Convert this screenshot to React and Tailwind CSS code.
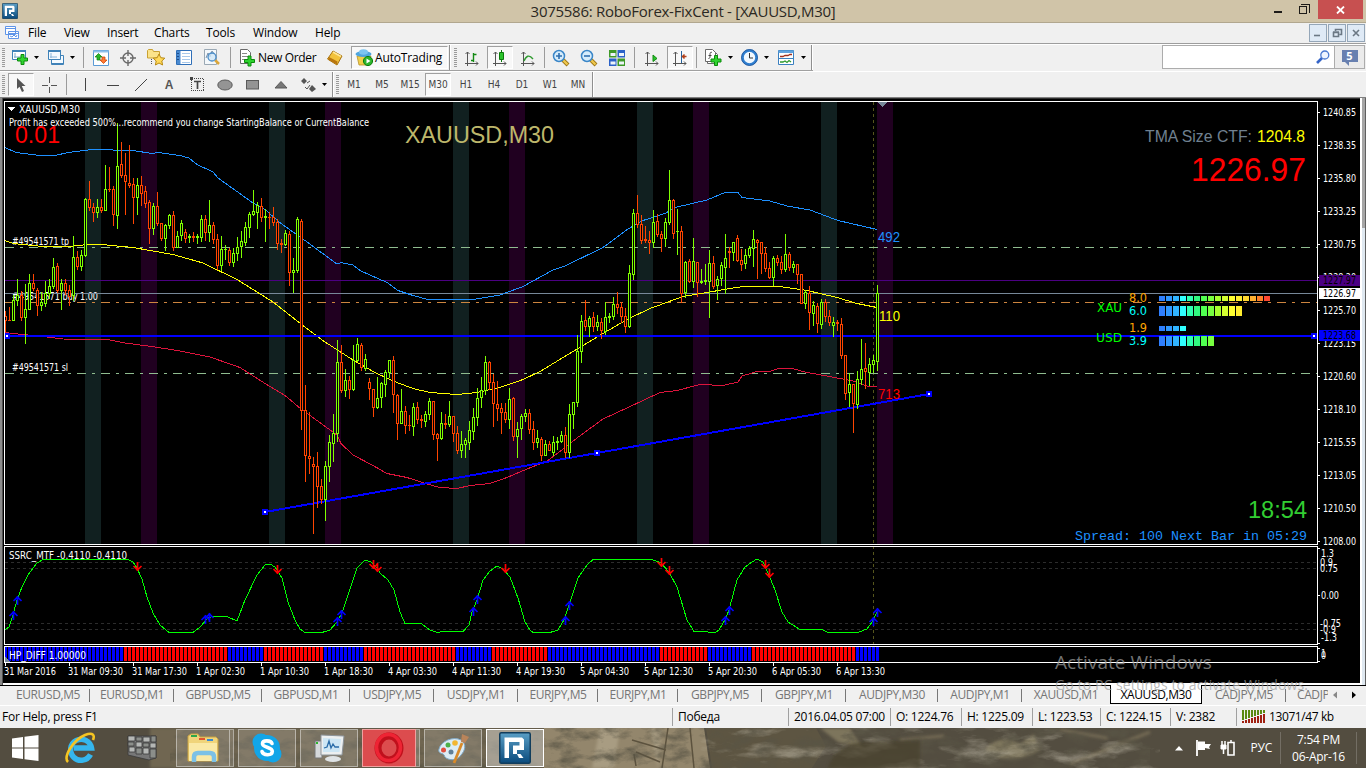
import React from 'react';

// [rising, high, bodyTop, bodyBottom, low] in chart pixels, one bar every 4px
const CANDLES = [
  [0,311,316,320,331],[0,307,320,320,320],[1,295,300,320,320],[1,279,295,300,305],[0,291,295,317,320],[1,284,309,317,343],
  [1,274,283,309,309],[0,274,283,288,290],[0,288,290,305,315],[1,292,302,305,310],[1,281,293,303,306],[1,279,286,293,298],
  [1,258,267,286,288],[0,263,266,290,292],[1,279,283,290,309],[0,279,283,290,294],[0,285,290,296,305],[1,236,257,295,300],
  [0,251,257,266,269],[1,250,255,266,270],[1,198,199,255,256],[0,181,199,207,210],[0,203,207,212,221],[1,199,207,212,217],
  [0,199,207,210,212],[1,165,189,210,210],[0,167,189,189,191],[0,186,189,214,225],[1,123,166,215,228],[0,142,164,175,177],
  [0,153,175,181,214],[0,145,183,185,187],[0,178,184,197,223],[1,178,185,197,214],[0,176,185,193,205],[0,186,191,203,207],
  [0,200,202,228,243],[1,203,206,228,234],[0,192,206,223,225],[0,223,223,238,240],[1,224,225,238,250],[1,214,215,225,228],
  [0,211,215,247,250],[1,231,236,247,247],[1,220,223,235,240],[0,229,232,238,242],[1,234,236,237,242],[0,232,236,237,241],
  [1,234,236,237,243],[1,215,219,237,241],[0,215,219,232,240],[1,200,225,232,241],[0,222,225,239,243],[0,234,239,265,269],
  [1,236,249,265,270],[1,245,249,249,259],[0,248,250,262,265],[1,248,253,262,266],[1,237,247,253,260],[1,231,241,246,257],
  [1,222,227,242,245],[1,212,214,227,237],[1,190,211,214,215],[1,202,205,212,228],[0,198,206,217,221],[1,209,216,217,241],
  [0,212,217,217,228],[0,207,217,222,225],[0,219,222,243,249],[0,239,243,244,252],[1,230,233,244,245],[0,231,234,272,285],
  [1,258,270,272,292],[1,217,219,270,272],[0,219,221,410,429],[0,385,410,455,481],[0,412,456,458,473],[0,457,464,466,533],
  [0,452,466,486,507],[0,479,486,499,503],[1,461,466,499,520],[1,435,442,466,481],[1,414,433,443,461],[1,340,362,433,441],
  [0,345,362,390,392],[1,369,380,390,396],[0,376,380,389,398],[1,345,360,389,390],[1,338,344,360,361],[0,343,345,367,370],
  [1,354,359,368,370],[0,378,382,388,399],[0,389,389,407,416],[1,377,398,407,408],[1,382,383,397,407],[1,370,372,384,396],
  [1,360,360,372,377],[0,356,360,394,412],[0,394,395,423,439],[1,389,411,423,423],[0,406,411,425,433],[0,415,425,425,430],
  [1,403,407,426,435],[0,402,407,419,423],[0,415,419,420,427],[1,411,414,421,426],[1,398,401,414,419],[0,401,401,434,439],
  [0,433,434,438,460],[1,412,423,438,439],[0,414,423,424,428],[1,401,416,424,426],[0,416,416,433,441],[0,426,433,450,453],
  [1,431,444,450,457],[1,438,440,444,457],[1,421,430,442,449],[1,408,417,431,439],[1,388,398,417,425],[1,377,390,397,407],
  [1,356,362,390,394],[0,361,362,382,389],[0,374,382,403,426],[0,381,404,408,420],[0,403,408,412,433],[0,403,412,419,422],
  [1,388,399,419,428],[0,397,398,436,440],[1,422,429,436,457],[1,414,416,428,439],[1,409,413,416,421],[0,409,413,429,433],
  [0,421,429,442,449],[1,430,438,442,447],[0,437,439,455,460],[1,440,444,455,455],[0,441,444,450,450],[1,436,442,452,455],
  [1,437,441,442,449],[1,431,435,441,442],[0,427,435,452,457],[1,404,414,452,457],[1,402,402,414,428],[1,335,351,402,406],
  [1,315,321,351,362],[0,300,320,326,330],[1,316,318,326,336],[0,312,317,326,331],[1,315,322,326,330],[0,318,322,330,338],
  [1,302,317,331,334],[1,313,316,317,322],[1,297,304,316,319],[0,292,304,307,313],[0,302,307,316,322],[0,308,316,326,332],
  [1,265,273,326,327],[1,209,213,274,279],[0,195,213,224,227],[0,215,224,240,243],[0,226,239,240,242],[0,231,240,242,253],
  [1,210,222,242,247],[0,214,221,234,236],[0,231,234,238,251],[1,218,222,238,246],[1,170,200,222,224],[0,199,200,233,238],
  [1,209,231,231,254],[0,226,231,293,302],[1,261,262,292,297],[0,259,261,281,282],[1,238,261,281,287],[0,262,262,282,296],
  [1,269,281,282,283],[1,264,280,281,284],[1,250,263,281,317],[0,256,263,286,288],[1,276,279,285,299],[1,262,265,278,285],
  [1,234,258,267,293],[0,247,251,252,267],[1,242,242,252,260],[0,235,238,260,261],[0,249,260,264,270],[1,249,255,263,268],
  [1,246,248,255,257],[1,230,239,248,266],[0,239,240,242,278],[0,242,242,253,273],[0,247,253,268,271],[0,262,268,277,278],
  [1,256,258,277,285],[0,255,258,262,265],[0,256,262,269,273],[1,234,254,269,271],[0,252,254,267,270],[1,261,264,267,272],
  [0,264,264,274,283],[0,274,274,303,303],[1,290,292,303,308],[0,286,293,312,329],[1,301,305,313,325],[0,303,306,323,332],
  [1,299,302,324,328],[0,299,302,316,321],[0,310,316,322,325],[1,317,322,325,336],[0,320,322,323,330],[0,318,324,355,358],
  [0,355,355,393,399],[1,373,384,392,406],[0,384,384,403,432],[1,371,379,404,408],[1,339,369,379,384],[0,343,368,371,388],
  [1,358,364,372,385],[1,355,360,364,372],[1,285,293,361,370],
];

const UPPER = '5,147.5 16,152.5 40,155.5 55,155.5 68,152.5 92,149.5 133,150.5 152,153.5 158,152.5 180,155.5 189,158 197,164.5 213,172 218,178 237,191.5 253,203 265,209.5 281,223.5 305,240.5 337,264 341,262.5 353,265 361,271 387,282.5 398,290.5 413,295.5 428,299.5 470,300 500,295 523,286.5 553,270 565,266 603,247.5 628,229 643,220.5 665,213.5 675,207.5 707,200 725,192.5 738,192.5 742,197.5 770,201 787,206 810,210 838,220.5 877,229.5';
const MIDDLE = '5,240.5 13,243.5 43,246.5 68,246.5 88,244.5 107,245 133,247.5 150,250.5 173,254.5 203,263 237,279.5 273,302 301,324 325,342 353,360 373,371.5 393,381 413,388.5 430,392.5 457,394.5 477,392.5 500,387.5 523,379.5 540,371.5 573,351.5 603,333.5 628,319 650,308.5 683,296.5 707,292.5 727,289 743,286.5 780,286.5 807,290.5 837,297.5 857,303.5 877,307.5';
const LOWER = '5,332.5 13,333.5 43,336.5 63,339 107,339.5 125,343 155,347 180,351 210,357 240,367.5 265,383.5 285,395.5 301,409 317,420.5 337,435 341,443.5 353,455 373,465.5 387,473.5 407,477.5 427,484 440,487.5 457,488.5 470,485.5 490,483.5 507,477.5 527,469 547,461 562,450 577,438 603,419 628,407.5 660,392.5 677,390.5 700,384.5 723,385.5 738,382 742,376 757,371.5 770,371.5 778,368.5 792,368.5 807,372.5 827,376 853,381 867,386 877,386.5';
const SSRC = '5,630 9,627 13,615 17,600 22,587 28,575 37,563 43,559.5 128,559.5 133,562 137,568 142,579 147,597 153,613 160,625 169,632.5 193,632.5 200,627 208,618 213,616.5 227,616.5 237,621 245,600 257,575 265,565 270,564 275,567 282,578 288,602 295,620 300,629 305,632.5 322,632.5 330,630 337,622 342,613 348,595 357,568 365,560 371,562 377,568 380,573 388,580 394,590 400,612 405,623.5 421,623.5 430,630 437,632.5 443,631.5 463,631.5 469,625 472,612 477,600 483,580 490,571 497,566 503,569 510,577 518,598 525,622 530,630 533,632.5 550,632.5 558,630 564,620 569,605 578,578 587,565 593,559.5 652,559.5 661,563 669,572 677,587 687,620 694,631.5 707,631.5 709,632.5 715,632.5 719,630 725,620 729,610 737,580 745,567 752,562 757,559 763,562 768,573 775,590 782,612 788,622 800,629.5 822,629.5 828,632.5 858,632.5 867,629 872,622 877,612';

const DOWN_ARROWS = [[137,562],[277,565],[373,560],[377,563],[505,564],[661,558],[669,566],[765,560],[769,569]];
const UP_ARROWS = [[13,610],[17,595],[205,614],[209,612],[337,616],[341,609],[473,606],[477,594],[565,615],[569,600],[725,615],[729,605],[873,616],[877,607]];

// start index of each run in the HP_DIFF histogram, colours alternate from blue
const HP_RUNS = [0, 30, 56, 65, 80, 90, 113, 122, 136, 164, 176, 187, 213, 219];

const PRICES = ['1240.85', '1238.35', '1235.80', '1233.25', '1230.75', '1228.20', '1225.70', '1223.15', '1220.60', '1218.10', '1215.55', '1213.05', '1210.50', '1208.00'];
const TIMES = ['31 Mar 2016', '31 Mar 09:30', '31 Mar 17:30', '1 Apr 02:30', '1 Apr 10:30', '1 Apr 18:30', '4 Apr 03:30', '4 Apr 11:30', '4 Apr 19:30', '5 Apr 04:30', '5 Apr 12:30', '5 Apr 20:30', '6 Apr 05:30', '6 Apr 13:30'];
const HEAT = ['#2f80ff', '#3098ff', '#30b4ff', '#30ffff', '#30ffb0', '#30f880', '#50ff50', '#78ff40', '#a8ff30', '#d4ff30', '#ffff30', '#ffee30', '#ffd830', '#ffb030', '#ff8028', '#ff4830'];
const STRENGTH = [[296, 5, 16], [306, 10, 12], [326, 5, 4], [336, 10, 8]];

const TAHOMA = '"DejaVu Sans Condensed", "DejaVu Sans", sans-serif';
const ARIAL = '"Liberation Sans", Arial, sans-serif';

const T = ({ x, y, w, size = 10, fill = '#fff', font = TAHOMA, children }) => (
  <text x={x} y={y} textLength={w} lengthAdjust="spacingAndGlyphs" fontSize={size} fill={fill} fontFamily={font}>{children}</text>
);

const Candle = ({ index, data }) => {
  const [up, high, top, bottom, low] = data;
  const x = 5 + index * 4;
  const color = up ? '#7fff00' : '#ff4500';
  return (
    <g>
      <rect x={x} y={high} width="1" height={low - high + 1} fill={color} />
      <rect x={x - 1} y={top} width="3" height={bottom - top + 1} fill={color} />
      {bottom - top > 1 && <rect x={x} y={top + 1} width="1" height={bottom - top - 1} fill="#000" />}
    </g>
  );
};

const Handle = ({ x, y }) => (
  <g>
    <rect x={x - 3} y={y - 3} width="6" height="6" fill="#0000ff" />
    <rect x={x - 1} y={y - 1} width="2" height="2" fill="#fff" />
  </g>
);

const Chart = () => (
  <svg width="1357" height="584" viewBox="3 99 1357 584" className="block bg-black" shapeRendering="crispEdges">
    {/* session bands */}
    {[85, 269, 453, 637, 821].map(x => <rect key={x} x={x} y="102" width="16" height="442" fill="#112020" />)}
    {[141, 325, 509, 693, 877].map(x => <rect key={x} x={x} y="102" width="16" height="442" fill="#200020" />)}
    <path d="M873.5 102V661" stroke="#55551c" strokeDasharray="3 3" />

    {/* order and price levels */}
    <path d="M5 247.5H1317M5 373.5H1317" stroke="#8fbc8f" strokeDasharray="9 6 3 6" />
    <path d="M5 302.5H1317" stroke="#cd853f" strokeDasharray="9 6 3 6" />
    <T x={12} y={245} w={57}>#49541571 tp</T>
    <T x={12} y={300} w={86}>#49541571 buy 1.00</T>
    <T x={12} y={371} w={56}>#49541571 sl</T>
    <path d="M5 280.5H1317" stroke="#4b0082" />
    <path d="M5 293.5H1317" stroke="#778899" />

    <polyline points={LOWER} fill="none" stroke="#dc143c" />
    <polyline points={UPPER} fill="none" stroke="#1e90ff" />
    <polyline points={MIDDLE} fill="none" stroke="#ffff00" />
    <path d="M5 336H1317" stroke="#0000ff" strokeWidth="2" />
    <path d="M265 512L929 394" stroke="#0000ff" strokeWidth="2" />
    {CANDLES.map((c, i) => <Candle key={i} index={i} data={c} />)}
    <Handle x={7} y={336} />
    <Handle x={1314} y={336} />
    <Handle x={265} y={512} />
    <Handle x={597} y={453} />
    <Handle x={929} y={394} />

    {/* frames */}
    <path d="M4.5 101.5H1317.5V544.5H4.5ZM4.5 546.5H1317.5V644.5H4.5ZM4.5 646.5H1317.5V662.5H4.5Z" fill="none" stroke="#fff" />
    <path d="M877 102h11l-5.5 5z" fill="#778899" />

    <path d="M8 107h7l-3.5 4z" fill="#fff" />
    <T x={19} y={113} w={61}>XAUUSD,M30</T>
    <T x={9} y={126} w={360}>Profit has exceeded 500%...recommend you change StartingBalance or CurrentBalance</T>
    <T x={15} y={143} w={45} size={24} fill="#ff0000" font={ARIAL}>0.01</T>
    <T x={405} y={143} w={149} size={24} fill="#bdb76b" font={ARIAL}>XAUUSD,M30</T>
    <T x={1145} y={142} w={107} size={17} fill="#708090" font={ARIAL}>TMA Size CTF:</T>
    <T x={1257} y={142} w={48} size={17} fill="#ffff00" font={ARIAL}>1204.8</T>
    <T x={1191} y={181} w={115} size={33} fill="#ff0000" font={ARIAL}>1226.97</T>
    <T x={1248} y={518} w={59} size={24} fill="#32cd32" font={ARIAL}>18:54</T>
    <T x={1075} y={540} w={232} size={13} fill="#1e90ff" font={'"Liberation Mono", monospace'}>Spread: 100 Next Bar in 05:29</T>
    <T x={878} y={242} w={22} size={14} fill="#1e90ff" font={ARIAL}>492</T>
    <T x={879} y={321} w={21} size={14} fill="#ffff00" font={ARIAL}>110</T>
    <T x={878} y={399} w={22} size={14} fill="#ff0000" font={ARIAL}>713</T>

    {/* currency strength meter */}
    <T x={1097} y={312} w={25} size={13} fill="#00ff00">XAU</T>
    <T x={1096} y={342} w={26} size={13} fill="#00ff00">USD</T>
    <T x={1129} y={302} w={18} size={12} fill="#ffa500">8.0</T>
    <T x={1129} y={315} w={18} size={12} fill="#00ffff">6.0</T>
    <T x={1129} y={332} w={18} size={12} fill="#ffa500">1.9</T>
    <T x={1129} y={345} w={18} size={12} fill="#00ffff">3.9</T>
    {STRENGTH.map(([y, h, n]) => HEAT.slice(0, n).map((c, i) => (
      <rect key={y + c} x={1159 + i * 7} y={y} width="6" height={h} fill={c} />
    )))}

    {/* SSRC oscillator */}
    <path d="M5 562.5H1317M5 568.5H1317M5 623.5H1317M5 629.5H1317" stroke="#2c2c2c" strokeDasharray="3 3" />
    <polyline points={SSRC} fill="none" stroke="#00ff00" />
    {DOWN_ARROWS.map(([x, y]) => (
      <path key={x} d={`M${x + 0.5} ${y}v9M${x - 3.5} ${y + 4}l4 4l4 -4`} fill="none" stroke="#ff0000" strokeWidth="1.7" shapeRendering="auto" />
    ))}
    {UP_ARROWS.map(([x, y]) => (
      <path key={x} d={`M${x + 0.5} ${y + 10}v-9M${x - 3.5} ${y + 6}l4 -4l4 4`} fill="none" stroke="#0000ff" strokeWidth="1.7" shapeRendering="auto" />
    ))}
    <T x={9} y={559} w={118}>SSRC_MTF -0.4110 -0.4110</T>

    {/* HP_DIFF histogram */}
    {CANDLES.map((c, i) => {
      const run = HP_RUNS.filter(s => s <= i).length - 1;
      return <rect key={i} x={4 + i * 4 + (i ? 0 : 1)} y="647" width={i ? 3 : 2} height="14" fill={run % 2 ? '#ff0000' : '#0000ff'} />;
    })}
    <path d="M5 657l5 5h-5z" fill="#778899" />
    <T x={9} y={659} w={77}>HP_DIFF 1.00000</T>

    {/* price axis */}
    {PRICES.map((p, i) => (
      <g key={p}>
        <path d={`M1318 ${112.5 + i * 33}h2`} stroke="#fff" />
        <T x={1323} y={116 + i * 33} w={33}>{p}</T>
      </g>
    ))}
    <rect x="1319" y="275" width="41" height="11" fill="#4b0082" />
    <T x={1323} y={284} w={33} fill="#000">1227.97</T>
    <rect x="1319" y="288" width="41" height="11" fill="#fff" />
    <T x={1323} y={297} w={33} fill="#000">1226.97</T>
    <rect x="1319" y="330" width="41" height="11" fill="#0000ff" />
    <T x={1323} y={339} w={33} fill="#000">1223.68</T>

    <path d="M1318 548.5h2M1318 595.5h2M1318 643.5h2M1318 648.5h2M1318 661.5h2" stroke="#fff" />
    <T x={1321} y={557} w={13}>1.3</T>
    <T x={1320} y={566} w={13}>0.9</T>
    <T x={1320} y={572} w={18}>0.75</T>
    <T x={1321} y={599} w={18}>0.00</T>
    <T x={1320} y={627} w={21}>-0.75</T>
    <T x={1320} y={633} w={16}>-0.9</T>
    <T x={1321} y={641} w={16}>-1.3</T>
    <T x={1321} y={657} w={5}>1</T>
    <T x={1321} y={659} w={5}>0</T>

    {/* time axis */}
    {TIMES.map((t, i) => (
      <g key={t}>
        <path d={`M${5.5 + i * 64} 663v3`} stroke="#fff" />
        <T x={4 + i * 64} y={675} w={i === 0 ? 52 : i < 3 ? 55 : 49}>{t}</T>
      </g>
    ))}
  </svg>
);

const Grip = () => (
  <div className="w-[6px] h-full shrink-0 flex items-center pl-[2px]">
    <svg width="3" height="20" shapeRendering="crispEdges"><path d="M1.5 0v20" stroke="#9a9a9a" strokeWidth="3" strokeDasharray="1 1" /></svg>
  </div>
);

const Sep = ({ className = 'w-[7px]' }) => (
  <div className={`${className} h-full shrink-0 flex items-center justify-center`}>
    <div className="w-px h-[21px] bg-[#9b9b9b]"></div>
  </div>
);

const Edge = () => <div className="w-[2px] h-full shrink-0 border-l border-[#8f8f8f] bg-white"></div>;

const Tool = ({ className = 'w-[28px]', active, children }) => (
  <div className={`${className} h-full shrink-0 flex items-center justify-center`}>
    {active ? (
      <div className="w-[26px] h-[23px] flex items-center justify-center bg-[#f8f8f8] border border-[#a0a0a0] border-r-white border-b-white">{children}</div>
    ) : children}
  </div>
);

const Caret = ({ className = 'w-[7px]' }) => (
  <div className={`${className} shrink-0 flex items-center justify-center`}>
    <svg width="5" height="3" className="shrink-0"><path d="M0 0h5L2.5 3z" fill="#000" /></svg>
  </div>
);

const Plus = ({ x, y }) => (
  <path transform={`translate(${x} ${y})`} d="M4 .5h3v3.5h3.5v3H7v3.5H4V7H.5V4H4z" fill="#2fd32f" stroke="#0a8a0a" />
);

const Axes = ({ children }) => (
  <svg width="16" height="16" viewBox="0 0 16 16" fill="none" stroke="#555">
    <path d="M3.5 2v14M1 13.5h13M1.500 4l2-2 2 2M12 11.500l2 2-2 2" />
    {children}
  </svg>
);

const Magnifier = ({ plus }) => (
  <svg width="18" height="18" viewBox="0 0 18 18">
    <path d="M11 11l5 5" stroke="#9a7416" strokeWidth="4" />
    <path d="M11 11l4.500 4.500" stroke="#efc84e" strokeWidth="2.400" />
    <circle cx="7" cy="7" r="5.500" fill="#d6ecfb" stroke="#3a86c8" strokeWidth="1.500" />
    <path d={plus ? 'M4 7h6M7 4v6' : 'M4 7h6'} stroke="#2f6fb0" strokeWidth="1.600" />
  </svg>
);

const RoboLogo = ({ size }) => (
  <svg width={size} height={size} viewBox="0 0 32 32">
    <defs>
      <linearGradient id="robo" x1="0" y1="0" x2="0" y2="1"><stop offset="0" stopColor="#5a9fc6" /><stop offset="1" stopColor="#0a4a7c" /></linearGradient>
    </defs>
    <rect x=".75" y=".75" width="30.500" height="30.500" rx="1.500" fill="url(#robo)" stroke="#123d5c" strokeWidth="1.500" />
    <path d="M5.500 26V5.500H23l2 2V18h-7v4h-4v-8.500h6.500V10H10v16z" fill="#fff" />
    <path d="M18 22h3.500l3 4H20z" fill="#fff" />
  </svg>
);

const TitleBar = () => (
  <div className="h-[23px] bg-[#d0c4a8] border-b border-[#b1a78f] flex relative">
    <div className="w-[20px] pl-[2px] pt-[3px]"><RoboLogo size={16} /></div>
    <div className="flex-1 text-center text-[15px] leading-[22px] text-[#2b2823] tracking-[-0.28px] pr-[20px]">3075586: RoboForex-FixCent - [XAUUSD,M30]</div>
    <div className="absolute right-[3px] top-0 flex h-[19px]">
      <svg width="72" height="19" fill="none" stroke="#1d1b18" shapeRendering="crispEdges">
        <path d="M28 12h8" strokeWidth="2" />
        <path d="M53.500 6.500h7v7h-7zM53 6h8M55 4.500h8v8" />
      </svg>
      <div className="w-[45px] bg-[#c75050] flex items-center justify-center">
        <svg width="9" height="8"><path d="M1 .5l7 7M8 .5l-7 7" stroke="#fff" strokeWidth="1.800" /></svg>
      </div>
    </div>
  </div>
);

const MenuBar = () => (
  <div className="h-[21px] flex items-center border-b border-[#9d9d9d] text-[12px] text-black relative">
    <svg width="16" height="16" viewBox="0 0 16 16" className="ml-[4px]" fill="#fff" stroke="#5f95e8">
      <path d="M1.500 1.500h10v8h-10zM1 3.500h11M4.500 6.500h10v7h-10zM4 8.500h11" /><path d="M6 11l2 1 2-2 2 2 1-2" fill="none" />
    </svg>
    <div className="flex pl-[8px] tracking-[-0.15px]">
      <span className="w-[36px]">File</span>
      <span className="w-[43px]">View</span>
      <span className="w-[47px]">Insert</span>
      <span className="w-[52px]">Charts</span>
      <span className="w-[47px]">Tools</span>
      <span className="w-[62px]">Window</span>
      <span>Help</span>
    </div>
    <div className="absolute right-[1px] top-px flex gap-px">
      {['M5 11.500h6', 'M5.500 8.500h5v4h-5zM5 8h6M7.500 7v-1.500h6v5h-2', 'M6 6l6 6M12 6l-6 6'].map(d => (
        <div key={d} className="w-[18px] h-[18px] bg-[#dfeaf6] border border-[#94a6b8]">
          <svg width="16" height="16" viewBox="1 1 16 16" fill="none" stroke="#6b7885" strokeWidth="1.600"><path d={d} /></svg>
        </div>
      ))}
    </div>
  </div>
);

const MainToolbar = () => (
  <div className="h-[27px] flex border-t border-white">
    <div className="flex h-[26px] border-b border-[#a0a0a0] items-center">
      <Grip />
      <Tool className="w-[27px]">
        <svg width="18" height="17" viewBox="0 0 18 17"><path d="M1.500 1.500h13v9h-13z" fill="#fff" stroke="#3f82b8" /><path d="M1 2h14" stroke="#3f82b8" strokeWidth="2" /><path d="M4 4v5M3 8h7" stroke="#7aa8cc" /><Plus x={6} y={5} /></svg>
      </Tool>
      <Caret className="w-[6px]" />
      <Tool className="w-[30px] pl-[3px]">
        <svg width="18" height="17" viewBox="0 0 18 17" fill="#f4faff" stroke="#3f82b8"><path d="M4.500 6.500h12v9h-12z" /><path d="M4 14.500h13" /><path d="M1.500 1.500h12v9h-12z" /><path d="M1 2h13" strokeWidth="2" /><path d="M4 4v5M3 8h7" stroke="#8ab4d8" /></svg>
      </Tool>
      <Caret className="w-[6px]" />
      <Sep className="w-[13px] pl-[3px]" />
      <Tool className="w-[25px]">
        <svg width="16" height="16" viewBox="0 0 16 16"><path d="M.5.500h15v15H.5z" fill="#fff" stroke="#5b9bd5" /><path d="M.5.500h15v2H.5z" fill="#8fc0ea" /><path d="M5.500 3.500L9 7H7v3H4V7H2z" fill="#29b829" stroke="#107c10" strokeWidth=".7" /><path d="M10.500 13.500L14 10h-2V7H9v3H7z" fill="#ff7a33" stroke="#c33d00" strokeWidth=".7" /></svg>
      </Tool>
      <Tool className="w-[29px]">
        <svg width="16" height="16" viewBox="0 0 16 16" fill="none" stroke="#6a6a6a" strokeWidth="1.400"><circle cx="8" cy="8" r="5" /><path d="M8 0v6M8 10v6M0 8h6M10 8h6" /></svg>
      </Tool>
      <Tool>
        <svg width="18" height="17" viewBox="0 0 18 17"><path d="M.5 9V1.500l1-1h4l1 2h6V9z" fill="#fbe38a" stroke="#c9a132" /><path d="M4.500 10v6" stroke="#555" strokeDasharray="1 1" /><path d="M12 5l1.800 3.700 4 .5-3 2.800.8 4-3.600-2-3.600 2 .8-4-3-2.800 4-.5z" fill="#ffd95a" stroke="#b98a12" /></svg>
      </Tool>
      <Tool>
        <svg width="16" height="15" viewBox="0 0 16 15"><path d="M.5.500h15v14H.5z" fill="#fff" stroke="#2f6fb8" /><path d="M1 1h3.500v13H1z" fill="#4a8ad0" /><path d="M2 3v9" stroke="#123c78" strokeWidth="1.500" strokeDasharray="1 2" /><path d="M6 3.500h8M6 6.500h8M6 9.500h8M6 12.500h8" stroke="#a8c8ea" /></svg>
      </Tool>
      <Tool>
        <svg width="18" height="17" viewBox="0 0 18 17"><path d="M1.500.500h12v15h-12z" fill="#f4f8fb" stroke="#9aa8b4" /><path d="M3 9l2-5 2 4 2-6 2 3" fill="none" stroke="#7a90a8" /><path d="M12 11l4 4" stroke="#dba63a" strokeWidth="2.500" /><circle cx="9" cy="8" r="4" fill="#cfe6f8cc" stroke="#4a8cc8" strokeWidth="1.300" /></svg>
      </Tool>
      <Sep className="w-[8px]" />
      <div className="w-[87px] flex items-center pl-[5px] gap-[2px] text-[12px] whitespace-nowrap tracking-[-0.35px]">
        <svg width="17" height="18" viewBox="0 0 17 18" className="shrink-0"><path d="M1.500.500h7l3 3v11h-10z" fill="#fff" stroke="#6a6a6a" /><path d="M3 4.500h5M3 7.500h7M3 10.500h5" stroke="#888" /><Plus x={5} y={6.500} /></svg>
        New Order
      </div>
      <Tool>
        <svg width="16" height="16" viewBox="0 0 16 16"><path d="M.5 9L6 1l9 5-5 9z" fill="#f2c23c" stroke="#a87412" /><path d="M1 9.500l9 5 .5-3L2 7z" fill="#b9760e" /><path d="M6 2l8 4.500" stroke="#ffe89a" strokeWidth="1.500" /></svg>
      </Tool>
      <div className="w-[97px] h-[23px] ml-[2px] flex items-center pl-[3px] gap-[2px] bg-[#f8f8f8] border border-[#a0a0a0] border-r-white border-b-white text-[12px] tracking-[-0.15px]">
        <svg width="18" height="17" viewBox="0 0 18 17" className="shrink-0"><path d="M2 7l2 9h9l3-9z" fill="#f0cf4a" stroke="#b8912a" strokeWidth=".8" /><ellipse cx="8.500" cy="5" rx="8" ry="3" fill="#4fa5de" /><ellipse cx="8.500" cy="3" rx="4.500" ry="2.800" fill="#7cc4f0" /><circle cx="13" cy="12" r="4.600" fill="#2bb52b" stroke="#0d7c0d" /><path d="M11.500 9.500l4 2.500-4 2.500z" fill="#fff" /></svg>
        AutoTrading
      </div>
      <div className="w-px"></div>
      <Edge />
      <div className="w-px"></div>
      <Grip />
      <Tool><Axes><path d="M9.500 3v9M9.500 4.500h3M7 10.500h2.500" stroke="#128a12" strokeWidth="1.400" /></Axes></Tool>
      <Tool active><Axes><path d="M9.500 0v12" stroke="#0b7a0b" /><path d="M7.500 2.500h4v7h-4z" fill="#2bc42b" stroke="#0b7a0b" /></Axes></Tool>
      <Tool><Axes><path d="M4 11c2-5 5-7 9-2" stroke="#2f9b2f" strokeWidth="1.400" /></Axes></Tool>
      <Sep className="w-[5px]" />
      <Tool><Magnifier plus /></Tool>
      <Tool><Magnifier /></Tool>
      <Tool>
        <svg width="16" height="16" viewBox="0 0 16 16"><path d="M0 0h7.500v7.500H0zM8.500 8.500H16V16H8.500z" fill="#3f9a28" /><path d="M8.500 0H16v7.500H8.500zM0 8.500h7.500V16H0z" fill="#2b62c8" /><path d="M1.500 3h5v3h-5zM10 3h5v3h-5zM1.500 11.500h5v3h-5zM10 11.500h5v3h-5z" fill="#eef4fa" /></svg>
      </Tool>
      <Sep />
      <Tool><Axes><path d="M9 5l4 3.500-4 3z" fill="#2bc42b" stroke="#128a12" /></Axes></Tool>
      <Tool active><Axes><path d="M9.500 1v12" stroke="#27639c" /><path d="M14.500 6.500h-4m2-2l-2 2 2 2" stroke="#b0401a" strokeWidth="1.500" /></Axes></Tool>
      <Sep className="w-[5px]" />
      <Tool className="w-[29px]">
        <svg width="17" height="18" viewBox="0 0 17 18"><path d="M2.500 2.500h7l3 3v9h-10z" fill="#fff" stroke="#6a6a6a" /><path d="M.5.500h7l3 3v9h-10z" fill="#fff" stroke="#6a6a6a" /><path d="M7 3.500c-2-1-2 1-2 3s0 3-1.500 3M3.500 6.500h3" fill="none" stroke="#444" /><Plus x={5.500} y={6} /></svg>
      </Tool>
      <Caret className="w-[4px]" />
      <Tool className="w-[32px] pl-[3px]">
        <svg width="17" height="17" viewBox="0 0 17 17"><circle cx="8.500" cy="8.500" r="7" fill="#f0f8ff" stroke="#2f7fd0" strokeWidth="2.600" /><circle cx="8.500" cy="8.500" r="8" fill="none" stroke="#1b4f94" strokeWidth=".8" /><path d="M8.500 4v5h3.500" fill="none" stroke="#333" /></svg>
      </Tool>
      <Caret className="w-[4px]" />
      <Tool className="w-[33px] pl-[3px]">
        <svg width="16" height="15" viewBox="0 0 16 15" fill="none"><path d="M.5.500h15v14H.5z" fill="#fff" stroke="#3a80c0" /><path d="M.5.500h15v2.500H.5z" fill="#5fa2de" /><path d="M2 6.500h3l2-1h3l2-1h2" stroke="#a03020" strokeWidth="1.300" /><path d="M1 8.500h14" stroke="#3a80c0" /><path d="M2 12h3l2-1 2 1.500 2-2 2 1.500" stroke="#2f9b2f" strokeWidth="1.300" /></svg>
      </Tool>
      <Caret className="w-[4px]" />
      <div className="w-[6px]"></div>
      <Edge />
    </div>
    <div className="ml-auto mr-[1px] h-[24px] flex border border-[#acacac] bg-[#ebebeb]">
      <div className="w-[172px] bg-white flex items-center justify-end pr-[4px] border-r border-[#acacac]">
        <svg width="14" height="14" viewBox="0 0 14 14" fill="none"><path d="M1 13l5-5" stroke="#3565c8" strokeWidth="2.600" /><circle cx="8.800" cy="5" r="4" fill="#eef4ff" stroke="#4a78d0" strokeWidth="1.300" /></svg>
      </div>
      <div className="w-[29px] flex justify-center pt-[4px]">
        <div className="relative w-[16px] h-[16px]">
          <svg width="16" height="16" viewBox="0 0 16 16" className="block"><path d="M0 0h16v12H7v4l-4-4H0z" fill="#6880b0" /></svg>
          <span className="absolute inset-x-0 -top-px text-center text-[11px] leading-[14px] font-bold text-white">5</span>
        </div>
      </div>
    </div>
  </div>
);

const TIMEFRAMES = ['M1', 'M5', 'M15', 'M30', 'H1', 'H4', 'D1', 'W1', 'MN'];

const DrawToolbar = () => (
  <div className="h-[26px] flex items-center border-t border-white">
    <Grip />
    <Tool active className="w-[29px]">
      <svg width="10" height="16" viewBox="0 0 10 16"><path d="M1 1v11l2.500-2.300L6 15l2-1-2.200-5H9.500z" fill="#555" /></svg>
    </Tool>
    <Tool className="w-[27px]"><svg width="16" height="16" stroke="#555" shapeRendering="crispEdges"><path d="M8.500 0v6M8.500 10v6M1 8.500h6M10 8.500h6" /></svg></Tool>
    <Sep className="w-[9px]" />
    <Tool><svg width="14" height="14" stroke="#444" shapeRendering="crispEdges"><path d="M7.500 0v13" /></svg></Tool>
    <Tool><svg width="14" height="14" stroke="#444" shapeRendering="crispEdges"><path d="M1 7.500h12" /></svg></Tool>
    <Tool><svg width="14" height="14" stroke="#444"><path d="M1 13L13 1" /></svg></Tool>
    <Tool><span className="font-['Liberation_Sans',sans-serif] text-[12px] font-bold text-[#555]">A</span></Tool>
    <Tool>
      <svg width="14" height="15" viewBox="0 0 14 15"><path d="M1.500 1.500h12v12h-12z" fill="none" stroke="#444" strokeDasharray="1 1" shapeRendering="crispEdges" /><path d="M0 0h3v3H0z" fill="#444" /><path d="M4 4.500h7M7.500 4v8" stroke="#444" strokeWidth="1.700" /></svg>
    </Tool>
    <Tool><svg width="16" height="12"><ellipse cx="8" cy="6" rx="7.200" ry="5" fill="#949494" stroke="#5a5a5a" /></svg></Tool>
    <Tool><svg width="14" height="10"><rect x=".5" y=".5" width="12" height="8.500" fill="#949494" stroke="#5a5a5a" /></svg></Tool>
    <Tool><svg width="14" height="9"><path d="M1 8L7 1.500 13 8z" fill="#777" stroke="#5a5a5a" /></svg></Tool>
    <Tool className="w-[27px]">
      <svg width="15" height="14" viewBox="0 0 15 14" fill="#555"><path d="M3 0l3 3-3 3-3-3zM11 7l4 4-4 3-3-3z" /><path d="M4 9l2 2 3-4M6 5l3-2" fill="none" stroke="#555" /></svg>
    </Tool>
    <Caret className="w-[5px]" />
    <div className="w-[5px]"></div>
    <Edge />
    <Grip />
    <div className="flex h-full font-['DejaVu_Sans_Condensed','DejaVu_Sans',sans-serif] text-[10px] text-[#444]">
      {TIMEFRAMES.map(tf => <Tool key={tf} active={tf === 'M30'}>{tf}</Tool>)}
    </div>
    <Edge />
  </div>
);

const TABS = [
  ['EURUSD,M5', 'w-[84px]'], ['EURUSD,M1', 'w-[84px]'], ['GBPUSD,M5', 'w-[88px]'], ['GBPUSD,M1', 'w-[88px]'],
  ['USDJPY,M5', 'w-[84px]'], ['USDJPY,M1', 'w-[84px]'], ['EURJPY,M5', 'w-[80px]'], ['EURJPY,M1', 'w-[80px]'],
  ['GBPJPY,M5', 'w-[84px]'], ['GBPJPY,M1', 'w-[84px]'], ['AUDJPY,M30', 'w-[92px]'], ['AUDJPY,M1', 'w-[84px]'],
  ['XAUUSD,M1', 'w-[88px]'], ['XAUUSD,M30', 'w-[92px]'], ['CADJPY,M5', 'w-[84px]'],
];

const ChartTabs = () => (
  <div className="h-[20px] flex border-t border-black bg-[#f0f0f0] text-[12px] text-[#767676] whitespace-nowrap tracking-[-0.4px] pl-[6px]">
    {TABS.map(([name, width]) => name === 'XAUUSD,M30' ? (
      <div key={name} className={`${width} shrink-0 h-[19px] -mt-px pt-px leading-[17px] text-center bg-white text-black border-x border-b border-black`}>{name}</div>
    ) : (
      <div key={name} className={`${width} shrink-0 flex items-center h-[18px]`}>
        <span className="flex-1 text-center pl-px">{name}</span>
        <span className={`w-px h-[13px] ${name === 'XAUUSD,M1' ? 'bg-transparent' : 'bg-[#777]'}`}></span>
      </div>
    ))}
    <div className="w-[42px] pl-[11px] leading-[18px] overflow-hidden">CADJPY,M1</div>
    <svg width="30" height="10" viewBox="0 0 30 10" className="mt-[4px]"><path d="M9 1.500v7L5 5z" fill="#888" /><path d="M24 1.500v7L28 5z" fill="#000" /></svg>
  </div>
);

const Field = ({ className, children }) => (
  <div className={`${className} shrink-0 h-[18px] border-l border-[#a0a0a0] pl-[5px] flex items-center`}>{children}</div>
);

const StatusBar = () => (
  <div className="h-[23px] flex items-center bg-[#f0f0f0] text-[12px] text-black whitespace-nowrap tracking-[-0.25px] border-t border-white">
    <div className="w-[672px] pl-[2px] tracking-[-0.25px]">For Help, press F1</div>
    <Field className="w-[116px]">Победа</Field>
    <Field className="w-[102px]">2016.04.05 07:00</Field>
    <Field className="w-[71px]">O: 1224.76</Field>
    <Field className="w-[71px]">H: 1225.09</Field>
    <Field className="w-[68px]">L: 1223.53</Field>
    <Field className="w-[70px]">C: 1224.15</Field>
    <Field className="w-[66px]">V: 2382</Field>
    <Field className="w-[130px] tracking-[-0.4px]">
      <svg width="24" height="14" viewBox="0 0 24 14" className="mr-[3px]" shapeRendering="crispEdges">
        {[0, 1, 2, 3, 4, 5, 6, 7].map(i => (
          <g key={i}>
            <rect x={i * 3} y="0" width="2" height={10 - i} fill="#5a8a10" />
            <rect x={i * 3} y={11 - i} width="2" height={2 + i} fill="#a02010" />
          </g>
        ))}
      </svg>
      13071/47 kb
    </Field>
  </div>
);

const Wallpaper = () => (
  <svg className="absolute inset-0" width="1366" height="40" viewBox="0 0 1366 40">
    <defs>
      <filter id="rock" x="0" y="0" width="100%" height="100%">
        <feTurbulence type="fractalNoise" baseFrequency="0.045 0.09" numOctaves="5" seed="8" />
        <feColorMatrix values="0 0 0 0 0.1  0 0 0 0 0.09  0 0 0 0 0.06  0 2.8 0 0 -1.2" />
      </filter>
      <filter id="glint" x="0" y="0" width="100%" height="100%">
        <feTurbulence type="fractalNoise" baseFrequency="0.02 0.06" numOctaves="5" seed="21" />
        <feColorMatrix values="0 0 0 0 0.55  0 0 0 0 0.51  0 0 0 0 0.41  4 0 0 0 -2.1" />
      </filter>
      <filter id="soft"><feGaussianBlur stdDeviation="1.600" /></filter>
    </defs>
    <rect width="1366" height="40" fill="#534d40" />
    <path d="M150 0h400v40H150z" fill="#6f6651" filter="url(#soft)" />
    <path d="M544 0h160l6 40H544z" fill="#93866c" />
    <path d="M600 0h20l-6 40h-22zM650 0l8 40 4-40z" fill="#a89c82" filter="url(#soft)" />
    <path d="M632 12l34 10M636 24l24 10M668 0l-6 40M690 0l4 40M636 38l-2-12" stroke="#5c523e" strokeWidth="1.500" fill="none" />
    <path d="M706 0h110l10 18-14 22h-100z" fill="#5d5542" />
    <g filter="url(#soft)">
      <path d="M820 0h30l14 22-26-8zM984 22c10-12 24-14 36-6l14-10 6 16c-20 12-44 12-56 0z" fill="#7d745c" />
      <path d="M900 12l44-4M1070 36l80-32M1060 2l48 8" stroke="#746b54" strokeWidth="3" fill="none" />
    </g>
    <rect x="700" width="460" height="40" filter="url(#glint)" opacity=".5" />
    <rect x="170" width="980" height="40" filter="url(#rock)" opacity=".8" />
    <path d="M828 40c4-18 24-28 44-26l48-2v28z" fill="#48432f" opacity=".75" filter="url(#soft)" />
  </svg>
);

const TaskButton = ({ className = 'w-[58px]', stacked, children }) => (
  <div className={`${className} h-[38px] shrink-0 flex mr-[4px]`}>
    <div className="flex-1 border border-[#ffffff70] bg-[#ffffff22] flex items-center justify-center">{children}</div>
    {stacked && <div className="w-[4px] border-y border-r border-[#ffffff60] bg-[#ffffff22]"></div>}
  </div>
);

const Taskbar = () => (
  <div className="h-[40px] relative overflow-hidden">
    <Wallpaper />
    <div className="relative flex h-full items-center">
      <svg width="27" height="26" viewBox="0 0 27 26" className="ml-[12px]" fill="#fff"><path d="M0 3.500l11-1.500v10.500H0zM12.500 1.800L26.500 0v12.500h-14zM0 13.500h11V24L0 22.500zM12.500 13.500h14V26l-14-1.800z" /></svg>
      <svg width="31" height="32" viewBox="0 0 31 32" className="ml-[26px]" fill="none">
        <path d="M25.500 22.500a10.500 10.500 0 1 1 1-6.500H9" stroke="#35b6ee" strokeWidth="5.500" />
        <path d="M3 30C-2 25 8 8 20 3c8-3 10 0 8 5" stroke="#f5c422" strokeWidth="2.600" />
      </svg>
      <svg width="30" height="26" viewBox="0 0 30 26" className="ml-[31px]" stroke="#3a3a3a" strokeWidth=".8">
        <path d="M1 1h28v22l-7 2-21-5z" fill="#777" />
        <path d="M1 1h7v5H1zM16 2h7v5h-7zM9 7h6v5H9zM23 8h6v5h-6zM2 12h6v5H2zM16 13h6v6h-6z" fill="#b5b7b5" />
        <path d="M9 2h6v4H9zM24 1h5v6h-5zM1 7h6v4H1zM16 8h6v4h-6zM9 13h6v6H9zM23 14h6v9h-6z" fill="#8b8e8a" />
      </svg>
      <div className="flex ml-[19px] h-full items-center">
        <TaskButton stacked>
          <svg width="32" height="30" viewBox="0 0 32 30"><path d="M1 28V3l3-2h7l2 3h16l2 2v22z" fill="#f0d47a" stroke="#c7a142" /><path d="M4 2h6v2H4z" fill="#2da84a" /><path d="M12 5h6v2h-6z" fill="#e0552f" /><path d="M20 6h6v2h-6z" fill="#3b8ad0" /><path d="M2 10h28v18H2z" fill="#fae9a6" /><path d="M7 29v-5q0-4 4-4h12q4 0 4 4v5" fill="none" stroke="#7cc1e6" strokeWidth="4.500" /></svg>
        </TaskButton>
        <TaskButton>
          <svg width="32" height="32" viewBox="0 0 32 32"><circle cx="16" cy="16" r="13" fill="#12a5e8" /><circle cx="10" cy="10" r="8.500" fill="#12a5e8" /><circle cx="22" cy="22" r="8.500" fill="#12a5e8" /><path d="M21 11.500c-1-3-9-4-9.500 0-.5 4.500 10 3 9.800 8-.3 4.500-9.300 4-10.300 0" fill="none" stroke="#fff" strokeWidth="3.600" strokeLinecap="round" /></svg>
        </TaskButton>
        <TaskButton>
          <svg width="32" height="30" viewBox="0 0 32 30"><path d="M2 8h7v17H2z" fill="#d5d8da" stroke="#777" /><path d="M3 9h2v2H3z" fill="#2db82d" /><path d="M8 2l23 1-2 19H8z" fill="#eceff0" stroke="#8d949a" /><path d="M10 5l18 1-1.500 13H10z" fill="#cde6f4" /><path d="M11 15l3-1 2-6 2 7 2-4 2 3h4" fill="none" stroke="#2a6ca8" strokeWidth="1.300" /><ellipse cx="20" cy="26" rx="8" ry="3" fill="#dfe3e5" /></svg>
        </TaskButton>
        <div className="w-[58px] mr-[4px] h-[38px] flex">
          <div className="w-[54px] border border-[#f0a0a0] bg-[#dc4c4e] flex items-center justify-center">
            <svg width="32" height="32" viewBox="0 0 32 32"><ellipse cx="16" cy="16" rx="11" ry="12" fill="none" stroke="#c0101c" strokeWidth="7" /><ellipse cx="15.500" cy="15.500" rx="12" ry="13" fill="none" stroke="#ee2434" strokeWidth="3.500" /></svg>
          </div>
          <div className="w-[4px] border-y border-r border-[#ffffff60] bg-[#ffffff28]"></div>
        </div>
        <TaskButton>
          <svg width="32" height="32" viewBox="0 0 32 32"><path d="M2 17C4 9 16 4 24 8c6 4 4 11 0 15-3 5-10 6-15 3-2-1-1-3-3-4C3 21 1 20 2 17z" fill="#dcecf6" stroke="#7da6c4" /><circle cx="6.500" cy="18" r="2.500" fill="#e05040" /><circle cx="11" cy="13" r="2.500" fill="#4cb04a" /><circle cx="18" cy="11" r="2.800" fill="#f2b632" /><circle cx="14" cy="20" r="2.500" fill="#5f7f98" /><path d="M17 31l8-20" stroke="#d88a2a" strokeWidth="2.800" /><path d="M24 10l1-8 7 3-4 6z" fill="#b9845a" /></svg>
        </TaskButton>
        <div className="w-[58px] h-[38px] border border-white bg-[#ffffff60] flex items-center justify-center"><RoboLogo size={32} /></div>
      </div>
      <div className="ml-auto flex items-center h-full text-white text-[12px]">
        <svg width="8" height="5"><path d="M0 4.500L4 0l4 4.500z" fill="#fff" /></svg>
        <svg width="16" height="16" viewBox="0 0 16 16" className="ml-[13px]"><path d="M1 0v16" stroke="#fff" strokeWidth="1.800" /><path d="M2 1.500h7V10H2zM9 4h6l-2 3 1 2-5-1z" fill="#fff" /></svg>
        <svg width="15" height="16" viewBox="0 0 15 16" className="ml-[8px]" fill="none" stroke="#fff"><path d="M8 2.500h6v12.500H8z" strokeWidth="1.600" /><path d="M10 1h2M2 1v4M5 1v4" strokeWidth="1.500" /><path d="M1 5h5v4H1z" fill="#fff" /><path d="M3.500 9v5" strokeWidth="1.500" /></svg>
        <div className="ml-[15px] tracking-[-0.2px]">РУС</div>
        <div className="ml-[8px] w-px h-[32px] bg-[#ffffff30]"></div>
        <div className="w-[75px] text-center leading-[17px] tracking-[-0.25px]">7:54 PM<br />06-Apr-16</div>
        <div className="w-px h-[32px] bg-[#ffffff30] mr-[9px]"></div>
      </div>
    </div>
  </div>
);

const App = () => {
  return (
    <div className="w-[1366px] h-[768px] overflow-hidden relative flex flex-col bg-[#f0f0f0] font-['Open_Sans','Noto_Sans',sans-serif] text-black">
      <TitleBar />
      <MenuBar />
      <MainToolbar />
      <DrawToolbar />
      <div className="h-[588px] flex border-t border-[#808080]">
        <div className="w-[3px] bg-[#8a8a8a] border-r border-[#505050]"></div>
        <div className="h-[587px] flex flex-col">
          <div className="h-px bg-[#303030]"></div>
          <Chart />
          <div className="h-[2px] bg-white"></div>
        </div>
        <div className="w-[2px] bg-white"></div>
        <div className="flex-1 bg-[#dfe8f0] border-r border-[#606060]">
          <div className="h-[130px] bg-[#a6a6a6]"></div>
        </div>
      </div>
      <ChartTabs />
      <StatusBar />
      <Taskbar />
      {/* activation watermark */}
      <div className="absolute left-[1055px] top-[650px] whitespace-nowrap text-[#a0a0a0b8]">
        <div className="text-[19px] leading-[25px] tracking-[0.05px]">Activate Windows</div>
        <div className="text-[14px] leading-[20px] tracking-[0.1px]">Go to PC settings to activate Windows.</div>
      </div>
    </div>
  );
};

export default App;
